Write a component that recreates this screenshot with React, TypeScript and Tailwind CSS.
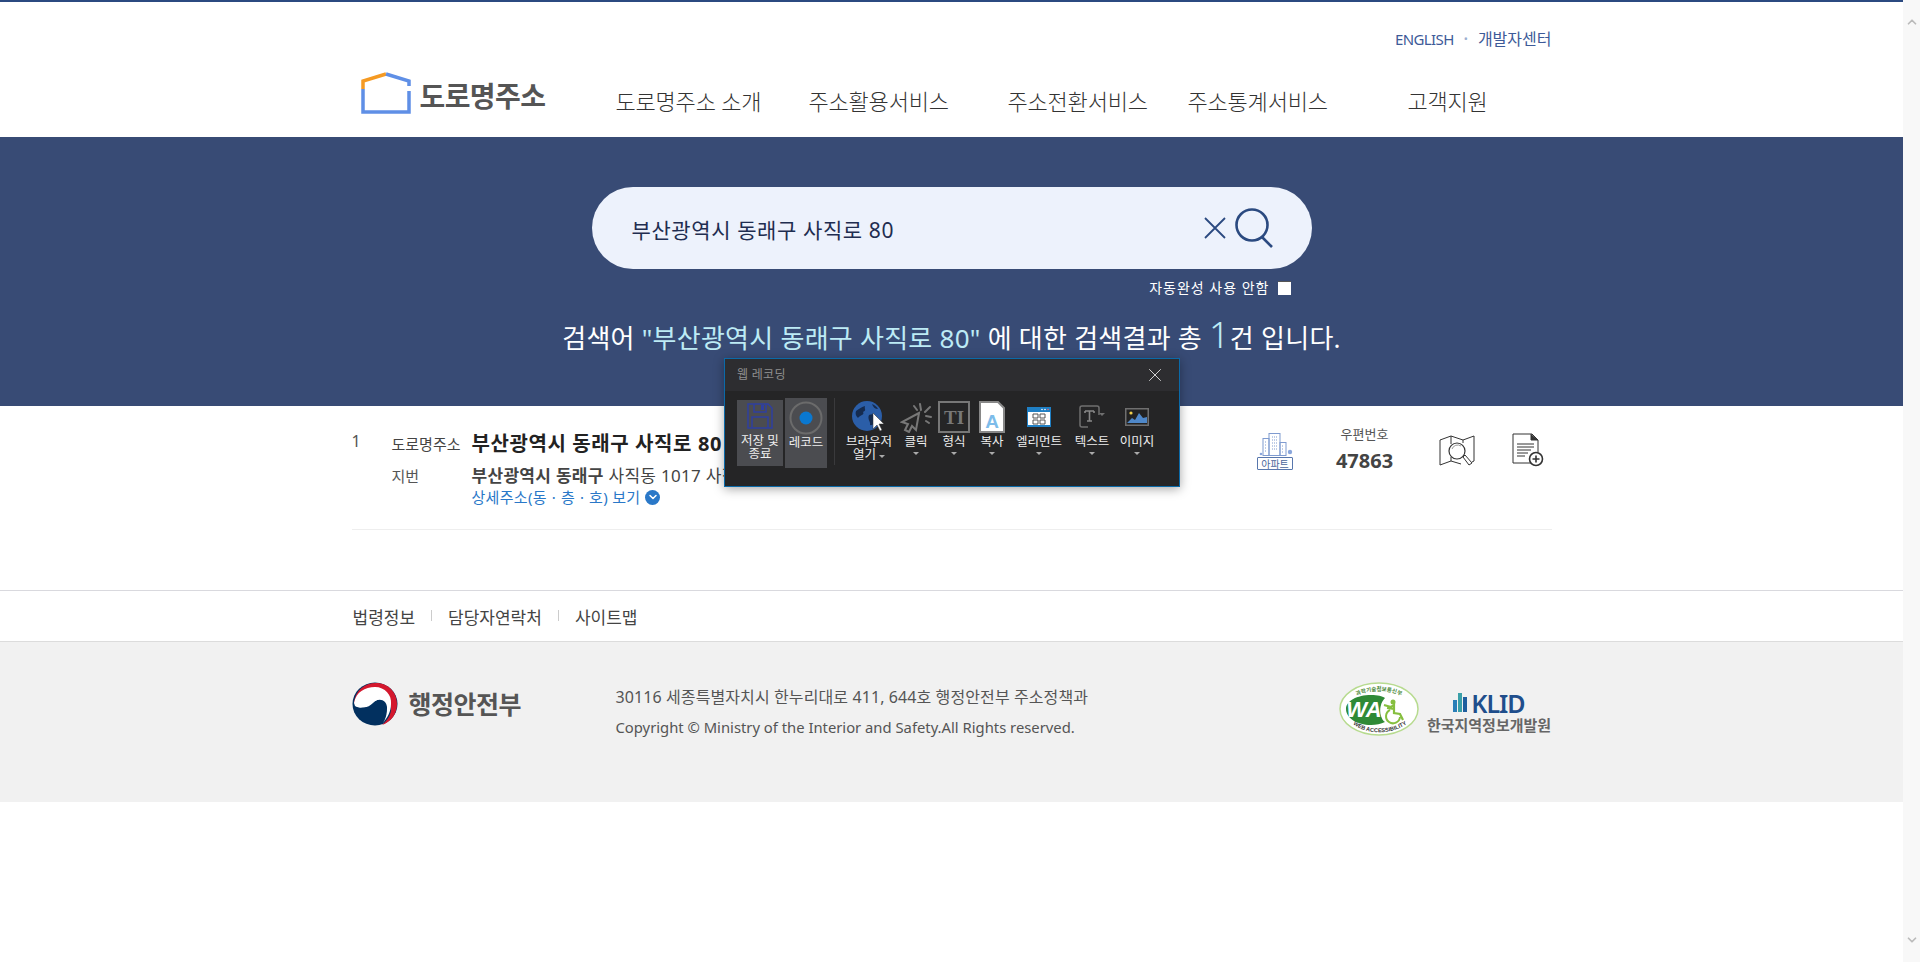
import React from "react";
import { X, ChevronDown, ChevronUp } from "lucide-react";

const navItems = [
  { label: "도로명주소 소개", width: "w-[193px]" },
  { label: "주소활용서비스", width: "w-[199px]" },
  { label: "주소전환서비스", width: "w-[180px]" },
  { label: "주소통계서비스", width: "w-[220px]" },
  { label: "고객지원", width: "w-[80px]" },
];

const HouseLogo = () => (
  <svg width="50" height="42" viewBox="0 0 50 42" fill="none">
    <path d="M2 17V9L25 2" stroke="#f59a23" strokeWidth="3.5" />
    <path d="M25 2L48 9V14" stroke="#5f8fe6" strokeWidth="3.5" />
    <path d="M48 19V40H2V17" stroke="#5f8fe6" strokeWidth="3.5" />
  </svg>
);

const BuildingIcon = () => (
  <svg width="38" height="36" viewBox="0 0 38 36" fill="none" stroke="#7f9bd0">
    <rect x="7" y="6.5" width="6" height="17" />
    <rect x="13" y="1.5" width="11" height="22" />
    <rect x="24" y="10.5" width="6" height="13" />
    <path d="M16 5h5M16 8h5M16 11h5M16 14h5M16 17h5M9 10h2M9 13h2M9 16h2M9 19h2M26 14h2M26 17h2M26 20h2" strokeDasharray="1 1" />
    <circle cx="34" cy="20" r="2.2" fill="#8aa6dc" stroke="none" />
    <circle cx="5" cy="22" r="1.3" fill="#8aa6dc" stroke="none" />
  </svg>
);

const MapSearchIcon = () => (
  <svg width="36" height="34" viewBox="0 0 36 34" fill="none" stroke="#333" strokeWidth="1">
    <path d="M1 6L12 2L24 6L35 2V27L33 28M22 30L12 27L1 31V6" />
    <path d="M12 2V10M12 23V27M24 6V9" />
    <circle cx="18" cy="17" r="8" strokeWidth="1.2" />
    <path d="M13 15a6 6 0 0 1 9-3" stroke="#999" />
    <path d="M24 23L26 21L33 29L30 31Z" fill="#fff" />
  </svg>
);

const DocPlusIcon = () => (
  <svg width="32" height="34" viewBox="0 0 32 34" fill="none" stroke="#333" strokeWidth="1">
    <path d="M19 30H1V1H20L26 7V19" />
    <path d="M19 1V7H26" fill="#333" />
    <path d="M5 11H22M5 14H22M5 17H19M5 20H16M5 23H13" />
    <circle cx="24" cy="26" r="6.5" fill="#fff" strokeWidth="1.6" />
    <path d="M20.5 26H27.5M24 22.5V29.5" strokeWidth="1.6" />
  </svg>
);

const MoisLogo = () => (
  <svg width="46" height="44" viewBox="0 0 46 44">
    <ellipse cx="23" cy="22" rx="22.5" ry="21.5" fill="#02305f" />
    <path d="M2 21C3 8 13 1 24 1C37 1 45 11 45 22C45 32 39 40 30 43C37 37 41 30 38 21C35 12 22 11 17 17C13 20 7 24 2 21Z" fill="#d4182e" />
    <path d="M2 21C4 10 13 5 23 5C33 5 40 13 39 22C39 30 35 36 31 41C36 33 36 24 31 20C27 17 22 19 19 22C15 26 7 27 3 24Z" fill="#fff" />
    <path d="M4 25C8 27 14 26 19 22C23 18 29 16 33 20C37 25 35 33 29 38C22 43 12 42 7 35C4 31 3 28 4 25Z" fill="#02305f" />
    <path d="M6 22C10 24 14 22 18 18C23 13 31 13 35 19C31 15 25 17 21 21C16 26 10 27 6 22Z" fill="#fff" />
  </svg>
);

const WaMark = () => (
  <svg width="80" height="54" viewBox="0 0 80 54">
    <ellipse cx="40" cy="27" rx="39" ry="26" fill="#fff" stroke="#b7db8f" strokeWidth="1.5" />
    <path d="M7 27C7 19 18 13 32 13C39 13 43 14 46 16C42 20 40 27 42 34C43 37 44 39 46 40C42 42 37 43 32 43C18 43 7 36 7 27Z" fill="#2f8a36" />
    <text x="25" y="35" fontSize="22" fontWeight="800" fontStyle="italic" fill="#fff" textAnchor="middle" fontFamily="Liberation Sans, sans-serif">WA</text>
    <circle cx="54" cy="20" r="2.5" fill="#86bf3f" />
    <path d="M45 23L52 25L55 23V31L61 32L64 38M55 27L48 26" stroke="#86bf3f" strokeWidth="2.2" fill="none" />
    <path d="M51 28a7 7 0 1 0 10 7" stroke="#86bf3f" strokeWidth="2" fill="none" />
    <path id="waTop" d="M12 18C24 6 56 6 68 18" fill="none" />
    <text fontSize="5.5" fontWeight="700" fill="#4c8a3a" fontFamily="Noto Sans CJK KR, sans-serif">
      <textPath href="#waTop" startOffset="50%" textAnchor="middle">과학기술정보통신부</textPath>
    </text>
    <path id="waBottom" d="M8 36C22 55 58 55 74 36" fill="none" />
    <text fontSize="5.6" fontWeight="800" fill="#333" fontFamily="Liberation Sans, sans-serif">
      <textPath href="#waBottom" startOffset="50%" textAnchor="middle">WEB ACCESSIBILITY</textPath>
    </text>
  </svg>
);

const KlidLogo = () => (
  <div className="flex w-[125px] flex-col items-center pt-[9px]">
    <div className="flex h-[24px] items-center">
      <svg width="16" height="22" viewBox="0 0 16 22">
        <rect x="0" y="8" width="4" height="12" fill="#2a7fb8" />
        <rect x="5" y="1" width="4" height="19" fill="#3aa0a8" />
        <rect x="10" y="5" width="4" height="15" fill="#1f5f9e" />
      </svg>
      <span className="ml-[2px] text-[25px] font-semibold leading-none tracking-[-1px] text-[#1f4e8c]">KLID</span>
    </div>
    <span className="whitespace-nowrap text-[15px] font-bold leading-[20px] text-[#666]">한국지역정보개발원</span>
  </div>
);

const SaveIcon = () => (
  <svg width="26" height="26" viewBox="0 0 26 26" fill="none" stroke="#2f3f9f" strokeWidth="1.5">
    <path d="M2 1H21L25 5V25H1V1Z" />
    <path d="M7 1V9H19V1M5 25V14H21V25" />
    <rect x="14" y="2" width="3" height="5" fill="#2f3f9f" stroke="none" />
  </svg>
);

const RecordIcon = () => (
  <svg width="34" height="34" viewBox="0 0 34 34" fill="none">
    <circle cx="17" cy="17" r="15.5" stroke="#6b6b6b" strokeWidth="2" />
    <circle cx="17" cy="17" r="6.5" fill="#0a78d0" />
  </svg>
);

const GlobeIcon = () => (
  <svg width="34" height="34" viewBox="0 0 34 34">
    <circle cx="15" cy="16" r="15" fill="#2b5ea8" />
    <path d="M4 11C7 9 9 7 13 6C12 9 15 10 11 12C13 15 8 15 6 18C4 16 3 14 4 11ZM17 15C21 13 24 15 26 18C24 22 21 26 18 25C19 22 15 19 17 15ZM20 4C23 5 25 7 26 9C23 9 21 7 20 4Z" fill="#152b4f" />
    <path d="M21 13V29L25 25L28 31L30 30L27 24L32 24Z" fill="#fff" stroke="#333" strokeWidth="0.5" />
  </svg>
);

const ClickIcon = () => (
  <svg width="32" height="32" viewBox="0 0 32 32" fill="none" stroke="#777" strokeWidth="2">
    <path d="M19 12L2 21L8 23L5 29L9 31L12 25L16 29Z" />
    <path d="M21 9L20 3M25 11L30 6M26 15L31 16M17 9L14 5M26 20L29 22" strokeLinecap="round" />
  </svg>
);

const FormatIcon = () => (
  <div className="flex h-[32px] w-[32px] items-center justify-center border-[2px] border-[#777] text-[19px] font-bold leading-none text-[#777] font-['Liberation_Serif',serif]">
    TI
  </div>
);

const CopyIcon = () => (
  <svg width="26" height="32" viewBox="0 0 26 32">
    <path d="M1 1H19L25 7V31H1Z" fill="#fff" stroke="#888" strokeWidth="2" />
    <text x="13" y="27" textAnchor="middle" fontSize="19" fontWeight="700" fill="#7dbcea" fontFamily="Liberation Sans, sans-serif">A</text>
  </svg>
);

const ElementIcon = () => (
  <svg width="24" height="20" viewBox="0 0 24 20">
    <rect width="24" height="20" fill="#1f7fc4" />
    <rect x="1" y="5" width="22" height="13" fill="#fff" />
    <path d="M6 7h5v4H6zM13 7h5v4h-5zM6 13h5v4H6zM13 13h5v4h-5z" fill="none" stroke="#555" strokeWidth="1" />
    <circle cx="15" cy="2.5" r="0.8" fill="#fff" />
    <circle cx="18" cy="2.5" r="0.8" fill="#fff" />
    <circle cx="21" cy="2.5" r="0.8" fill="#e66" />
  </svg>
);

const TextIcon = () => (
  <svg width="26" height="24" viewBox="0 0 26 24" fill="none" stroke="#6f6f6f" strokeWidth="1.5">
    <path d="M9 22H3a2 2 0 0 1-2-2V3a2 2 0 0 1 2-2H18a2 2 0 0 1 2 2V10" />
    <path d="M20 8L23 11L26 8" fill="#6f6f6f" stroke="none" />
    <path d="M6 6H15M10.5 6V16M8 16H13M6 6V8M15 6V8" strokeWidth="1.6" stroke="#888" />
  </svg>
);

const ImageIcon = () => (
  <svg width="24" height="18" viewBox="0 0 24 18">
    <rect x="0.75" y="0.75" width="22.5" height="16.5" fill="#222" stroke="#6f6f6f" strokeWidth="1.5" />
    <circle cx="6" cy="5" r="1.6" fill="#f2cf4a" />
    <path d="M2 15L7 10L10 12L14 5L18 10L22 9V15Z" fill="#4f88c9" />
  </svg>
);

const Caret = () => (
  <span className="mt-[4px] h-0 w-0 border-x-[3px] border-t-[3px] border-x-transparent border-t-[#aaa]" />
);

const tools = [
  { label: "브라우저", second: "열기", icon: <GlobeIcon />, width: "w-[52px]" },
  { label: "클릭", icon: <ClickIcon />, width: "w-[42px]" },
  { label: "형식", icon: <FormatIcon />, width: "w-[34px]" },
  { label: "복사", icon: <CopyIcon />, width: "w-[42px]" },
  { label: "엘리먼트", icon: <ElementIcon />, width: "w-[52px]" },
  { label: "텍스트", icon: <TextIcon />, width: "w-[54px]" },
  { label: "이미지", icon: <ImageIcon />, width: "w-[36px]" },
];

const RecorderPanel = () => (
  <div className="absolute left-[724px] top-[358px] h-[129px] w-[456px] border border-[#0b6aa8] bg-[#252526] shadow-[0_2px_10px_rgba(0,0,0,0.35)]">
    <div className="flex h-[32px] items-center justify-between bg-[#2d2d30] pl-[12px] pr-[13px]">
      <span className="text-[12px] tracking-[0.3px] text-[#8f8f8f]">웹 레코딩</span>
      <X size={22} strokeWidth={1} className="text-[#e0e0e0]" />
    </div>
    <div className="flex pl-[12px] pt-[7px]">
      <div className="mt-[2px] flex h-[66px] w-[46px] flex-col items-center bg-[#4b4c50] pt-[3px]">
        <SaveIcon />
        <span className="mt-[5px] text-center text-[12.5px] leading-[13px] text-[#eee]">저장 및 종료</span>
      </div>
      <div className="ml-[2px] flex h-[70px] w-[42px] flex-col items-center bg-[#4b4c50] pt-[3px]">
        <RecordIcon />
        <span className="mt-[1px] whitespace-nowrap text-[12.5px] leading-[13px] text-[#eee]">레코드</span>
      </div>
      <div className="ml-[7px] mr-[8px] h-[67px] w-px bg-[#3a3a3c]" />
      {tools.map((tool) => (
        <div key={tool.label} className={`flex ${tool.width} flex-col items-center pt-[3px]`}>
          <div className="flex h-[32px] items-center">{tool.icon}</div>
          <span className="mt-[2px] whitespace-nowrap text-center text-[12.5px] leading-[13px] text-[#eee]">{tool.label}</span>
          {tool.second ? (
            <span className="flex items-center gap-[3px] text-[12.5px] leading-[13px] text-[#eee]">
              {tool.second}
              <Caret />
            </span>
          ) : (
            <Caret />
          )}
        </div>
      ))}
    </div>
  </div>
);

export default function App() {
  return (
    <div className="flex h-[962px] overflow-hidden bg-white font-['Noto_Sans','Noto_Sans_CJK_KR',sans-serif]">
      <div className="relative flex-1">
        <header className="h-[137px] border-t-2 border-[#2b4a80]">
          <div className="mx-auto w-[1200px]">
            <div className="flex h-[47px] items-end justify-end leading-[20px] text-[#3d5a98]">
              <span className="text-[15px] tracking-[-0.6px]">ENGLISH</span>
              <span className="mx-[10px] text-[11px] text-[#9db0d0]">•</span>
              <span className="text-[16px]">개발자센터</span>
            </div>
            <div className="flex h-[88px] items-start">
              <div className="flex w-[264px] items-center pl-[9px] pt-[23px]">
                <HouseLogo />
                <span className="ml-[9px] mt-[6px] text-[28px] font-bold leading-[36px] tracking-[-0.6px] text-[#555]">도로명주소</span>
              </div>
              <nav className="flex pt-[37px] text-[22px] font-light leading-[30px] tracking-[-0.2px] text-[#333]">
                {navItems.map((item) => (
                  <a key={item.label} className={`${item.width} whitespace-nowrap`}>
                    {item.label}
                  </a>
                ))}
              </nav>
            </div>
          </div>
        </header>

        <section className="flex h-[269px] flex-col items-center bg-[#384b75] pt-[50px]">
          <div className="flex h-[82px] w-[720px] items-center rounded-full bg-[#edf2fc] pl-[40px] pr-[38px]">
            <span className="flex-1 pt-[5px] text-[21px] tracking-[0.6px] text-[#1f2d50]">부산광역시 동래구 사직로 80</span>
            <svg width="22" height="22" viewBox="0 0 22 22" fill="none" stroke="#2b4a80" strokeWidth="1.8">
              <path d="M1 1L21 21M21 1L1 21" />
            </svg>
            <svg width="40" height="42" viewBox="0 0 40 42" fill="none" stroke="#2b4a80" strokeWidth="2.6" className="ml-[8px]">
              <circle cx="18" cy="18" r="15.5" />
              <path d="M28 30L38 40" />
            </svg>
          </div>
          <div className="mt-[9px] flex w-[720px] items-center justify-end pr-[21px] text-[14px] leading-[20px] tracking-[1px] text-white">
            <span>자동완성 사용 안함</span>
            <span className="ml-[8px] h-[14px] w-[13px] border-t border-[#555] bg-white" />
          </div>
          <p className="mt-[21px] flex items-baseline whitespace-pre text-[26px] leading-[32px] tracking-[0.25px] text-white">
            검색어 <span className="text-[#bdebf5]">"부산광역시 동래구 사직로 80"</span> 에 대한 검색결과 총 <span className="text-[36px] font-light leading-[32px] text-[#bdebf5]">1</span>건 입니다.
          </p>
        </section>

        <section className="mx-auto h-[184px] w-[1200px]">
          <div className="flex h-[124px] border-b border-[#eee]">
            <span className="w-[40px] pt-[23px] text-[16px] leading-[24px] text-[#555]">1</span>
            <div className="w-[842px] pt-[25px]">
              <div className="flex h-[26px] items-center">
                <span className="w-[80px] text-[15px] text-[#444]">도로명주소</span>
                <span className="text-[20px] font-bold tracking-[0.6px] text-[#222]">부산광역시 동래구 사직로 80</span>
              </div>
              <div className="mt-[8px] flex h-[22px] items-center">
                <span className="w-[80px] text-[15px] text-[#555]">지번</span>
                <span className="text-[17px] tracking-[0.3px] text-[#444]">
                  <span className="font-semibold">부산광역시 동래구</span> 사직동 1017 사직
                </span>
              </div>
              <div className="flex h-[20px] items-center pl-[80px] text-[15px] tracking-[0.3px] text-[#2a78c8]">
                상세주소(동ㆍ층ㆍ호) 보기
                <span className="ml-[5px] flex h-[15px] w-[15px] items-center justify-center rounded-full bg-[#2a78c8]">
                  <ChevronDown size={12} strokeWidth={3} className="text-white" />
                </span>
              </div>
            </div>
            <div className="flex w-[80px] flex-col items-center pl-[3px] pt-[26px]">
              <BuildingIcon />
              <span className="-mt-[11px] flex h-[13px] w-[36px] items-center justify-center rounded-[1px] border border-[#5877ad] bg-white text-[10px] leading-none text-[#4a669c]">아파트</span>
            </div>
            <div className="ml-[6px] flex w-[90px] flex-col items-center pt-[18px]">
              <span className="text-[13px] leading-[20px] text-[#555]">우편번호</span>
              <span className="mt-[3px] text-[20px] font-bold leading-[28px] text-[#444]">47863</span>
            </div>
            <div className="ml-[29px] pt-[28px]">
              <MapSearchIcon />
            </div>
            <div className="ml-[37px] pt-[27px]">
              <DocPlusIcon />
            </div>
          </div>
        </section>

        <footer>
          <div className="h-[51px] border-t border-[#d9d9de]">
            <div className="mx-auto flex h-full w-[1200px] items-center pl-[1px] pt-[4px] text-[17px] text-[#444]">
              <a>법령정보</a>
              <span className="mx-[16px] h-[11px] w-px -translate-y-[3px] bg-[#ccc]" />
              <a>담당자연락처</a>
              <span className="mx-[16px] h-[11px] w-px -translate-y-[3px] bg-[#ccc]" />
              <a>사이트맵</a>
            </div>
          </div>
          <div className="h-[161px] border-t border-[#dcdcdc] bg-[#f1f1f1]">
            <div className="mx-auto flex w-[1200px] items-start pt-[40px]">
              <div className="flex w-[264px] items-center">
                <MoisLogo />
                <span className="ml-[11px] text-[25px] font-bold leading-[44px] tracking-[-0.5px] text-[#555]">행정안전부</span>
              </div>
              <div className="flex-1 leading-[30px] text-[#555]">
                <p className="text-[16px] tracking-[0.1px]">30116 세종특별자치시 한누리대로 411, 644호 행정안전부 주소정책과</p>
                <p className="text-[14.8px]">Copyright © Ministry of the Interior and Safety.All Rights reserved.</p>
              </div>
              <div className="flex items-start gap-[8px]">
                <WaMark />
                <KlidLogo />
              </div>
            </div>
          </div>
        </footer>

        <RecorderPanel />
      </div>

      <div className="flex w-[17px] flex-col items-center justify-between bg-[#f8f8f8] py-[15px] text-[#bbb]">
        <ChevronUp size={14} strokeWidth={3} />
        <ChevronDown size={14} strokeWidth={3} />
      </div>
    </div>
  );
}
